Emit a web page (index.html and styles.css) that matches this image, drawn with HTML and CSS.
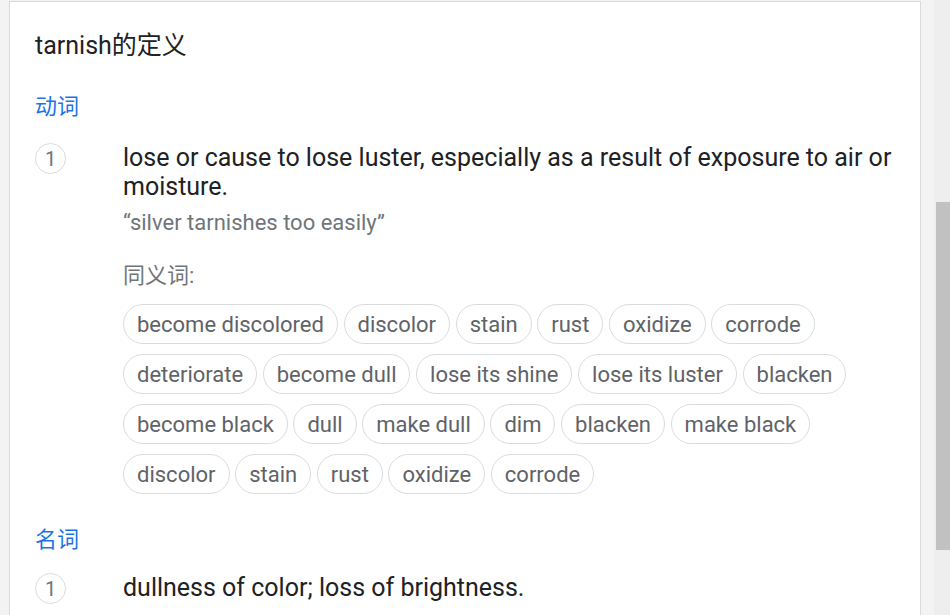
FILE: index.html
```html
<!DOCTYPE html>
<html lang="zh">
<head>
<meta charset="utf-8">
<link rel="stylesheet" href="styles.css">
</head>
<body>
<div class="page">
  <div class="gutter"></div>
  <main class="panel">
    <h1 class="title">tarnish的定义</h1>

    <section class="pos">
      <h2 class="pos-label">动词</h2>
      <div class="sense">
        <div class="num"><span class="circle">1</span></div>
        <div class="body">
          <p class="def">lose or cause to lose luster, especially as a result of exposure to air or moisture.</p>
          <p class="example">“silver tarnishes too easily”</p>
          <p class="syn-label">同义词:</p>
          <div class="chips">
            <span class="chip">become discolored</span>
            <span class="chip">discolor</span>
            <span class="chip">stain</span>
            <span class="chip">rust</span>
            <span class="chip">oxidize</span>
            <span class="chip">corrode</span>
            <span class="chip">deteriorate</span>
            <span class="chip">become dull</span>
            <span class="chip">lose its shine</span>
            <span class="chip">lose its luster</span>
            <span class="chip">blacken</span>
            <span class="chip">become black</span>
            <span class="chip">dull</span>
            <span class="chip">make dull</span>
            <span class="chip">dim</span>
            <span class="chip">blacken</span>
            <span class="chip">make black</span>
            <span class="chip">discolor</span>
            <span class="chip">stain</span>
            <span class="chip">rust</span>
            <span class="chip">oxidize</span>
            <span class="chip">corrode</span>
          </div>
        </div>
      </div>
    </section>

    <section class="pos pos-noun">
      <h2 class="pos-label">名词</h2>
      <div class="sense">
        <div class="num"><span class="circle">1</span></div>
        <div class="body">
          <p class="def">dullness of color; loss of brightness.</p>
        </div>
      </div>
    </section>
  </main>
  <div class="spacer"></div>
  <div class="scrollbar"><div class="thumb"></div></div>
</div>
</body>
</html>
```

FILE: styles.css
```css
html, body {
  margin: 0;
  padding: 0;
  height: 100%;
  overflow: hidden;
}
body {
  background: #f3f3f3;
  font-family: Roboto, "Noto Sans CJK SC", sans-serif;
  color: #202124;
}
.page {
  display: flex;
  height: 615px;
}
.gutter {
  width: 9px;
  flex: none;
}
.panel {
  width: 912px;
  flex: none;
  margin-top: 1px;
  background: #fff;
  border: 1px solid #dadada;
  border-bottom: none;
  padding: 28px 0 0 25px;
  box-sizing: border-box;
  overflow: hidden;
}
.spacer {
  width: 13px;
  flex: none;
}
.scrollbar {
  width: 16px;
  flex: none;
  background: #eeeeee;
  padding: 202px 0 0 2px;
  box-sizing: border-box;
}
.thumb {
  height: 348px;
  background: #c1c1c1;
}
.title {
  margin: 0;
  font-size: 25px;
  line-height: 32px;
  font-weight: 400;
  color: #202124;
}
.pos {
  margin-top: 31px;
}
.pos-noun {
  margin-top: 32px;
}
.pos-label {
  margin: 0;
  font-size: 22px;
  line-height: 28px;
  font-weight: 400;
  color: #1a73e8;
}
.sense {
  display: flex;
  margin-top: 22px;
}
.pos-noun .sense {
  margin-top: 19px;
}
.num {
  width: 88px;
  flex: none;
}
.circle {
  display: flex;
  align-items: center;
  justify-content: center;
  width: 31px;
  height: 31px;
  box-sizing: border-box;
  border: 1px solid #dadce0;
  border-radius: 50%;
  font-size: 20px;
  color: #70757a;
}
.body {
  flex: 1;
  padding-right: 20px;
}
.def {
  margin: 0;
  font-size: 25px;
  line-height: 29px;
  color: #202124;
}
.example {
  margin: 9px 0 0;
  font-size: 22px;
  line-height: 26px;
  color: #70757a;
}
.syn-label {
  margin: 27px 0 0;
  font-size: 22px;
  line-height: 26px;
  color: #70757a;
}
.chips {
  display: flex;
  flex-wrap: wrap;
  gap: 10px 5.6px;
  margin-top: 15px;
}
.chip {
  display: inline-flex;
  align-items: center;
  height: 40px;
  box-sizing: border-box;
  padding: 0 13px;
  border: 1px solid #dadce0;
  border-radius: 20px;
  font-size: 22px;
  color: #5f6368;
}
```
